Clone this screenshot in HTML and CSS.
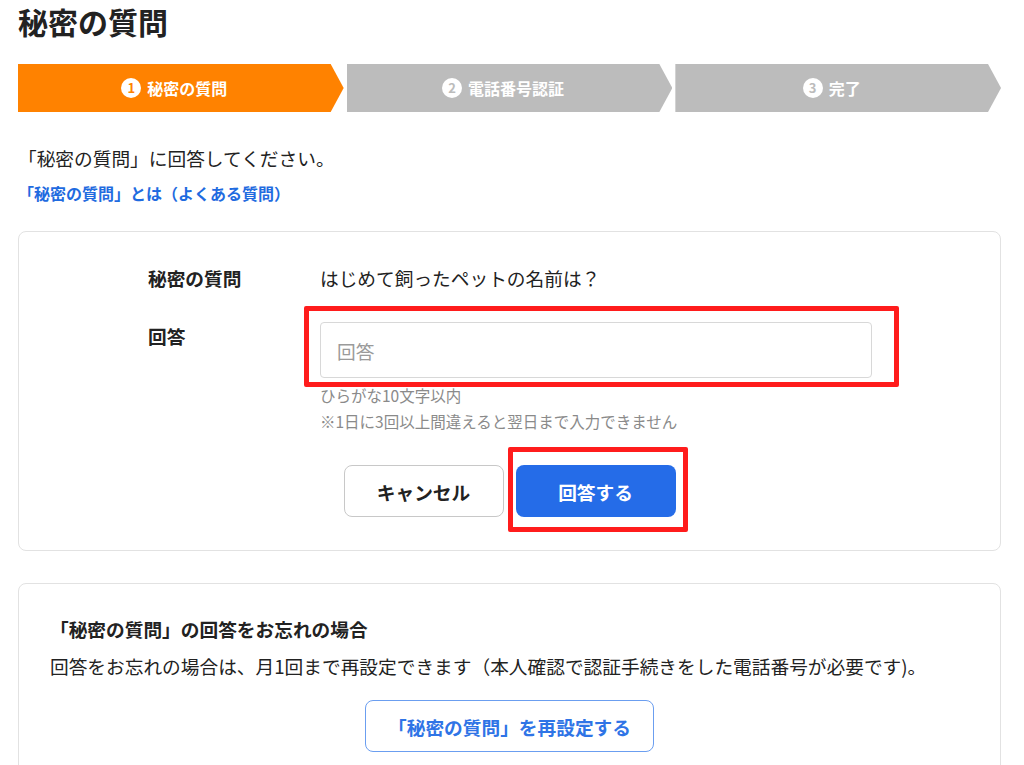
FILE: index.html
```html
<!DOCTYPE html>
<html lang="ja">
<head>
    <meta charset="UTF-8">
    <meta name="viewport" content="width=device-width, initial-scale=1.0">
    <title>秘密の質問</title>
    <link rel="stylesheet" href="styles.css">
</head>
<body>

    <div class="page">
        <h1 class="page-title">秘密の質問</h1>

        <!-- Step Bar -->
        <ol class="steps">
            <li class="step is-current"><span class="step-num">1</span>秘密の質問</li>
            <li class="step"><span class="step-num">2</span>電話番号認証</li>
            <li class="step"><span class="step-num">3</span>完了</li>
        </ol>

        <p class="lead">「秘密の質問」に回答してください。</p>
        <a class="faq-link" href="#">「秘密の質問」とは（よくある質問）</a>

        <!-- Answer Form -->
        <form class="card answer-card" onsubmit="return false;">
            <div class="form-grid">
                <div class="form-label">秘密の質問</div>
                <div class="form-value">はじめて飼ったペットの名前は？</div>

                <label class="form-label" for="answer">回答</label>
                <div class="form-field">
                    <div class="marked">
                        <input type="text" id="answer" class="text-input" placeholder="回答">
                        <span class="mark mark-input"></span>
                    </div>
                    <p class="hint">ひらがな10文字以内</p>
                    <p class="hint">※1日に3回以上間違えると翌日まで入力できません</p>
                </div>
            </div>

            <div class="form-actions">
                <button type="button" class="btn btn-cancel">キャンセル</button>
                <div class="marked">
                    <button type="submit" class="btn btn-primary">回答する</button>
                    <span class="mark mark-submit"></span>
                </div>
            </div>
        </form>

        <!-- Forgotten Answer -->
        <div class="card reset-card">
            <h2 class="reset-title">「秘密の質問」の回答をお忘れの場合</h2>
            <p class="reset-text">回答をお忘れの場合は、月1回まで再設定できます（本人確認で認証手続きをした電話番号が必要です)。</p>
            <div class="reset-actions">
                <button type="button" class="btn btn-outline">「秘密の質問」を再設定する</button>
            </div>
        </div>
    </div>

</body>
</html>
```

FILE: styles.css
```css
/* Global Styles */
body {
    margin: 0;
    font-family: "Noto Sans CJK JP", "Noto Sans", sans-serif;
    font-size: 18.7px;
    line-height: 27px;
    color: #222;
    background: #fff;
}

.page {
    width: 983px;
    margin-left: 18px;
    padding-bottom: 40px;
}

.page-title {
    margin: 0;
    font-size: 30px;
    line-height: 42px;
    font-weight: bold;
}

/* Step Bar */
.steps {
    display: flex;
    gap: 3px;
    margin: 22px 0 0;
    padding: 0;
    list-style: none;
}

.step {
    flex: 1;
    height: 48px;
    padding-right: 13px;
    display: flex;
    align-items: center;
    justify-content: center;
    gap: 6px;
    background: #bcbcbc;
    color: #fff;
    font-size: 16px;
    font-weight: bold;
    clip-path: polygon(0 0, calc(100% - 13px) 0, 100% 50%, calc(100% - 13px) 100%, 0 100%);
}

.step.is-current {
    background: #ff8200;
}

.step-num {
    flex: none;
    width: 20px;
    height: 20px;
    border-radius: 50%;
    background: #fff;
    color: #bcbcbc;
    font-size: 13px;
    line-height: 20px;
    text-align: center;
}

.is-current .step-num {
    color: #ff8200;
}

/* Intro */
.lead {
    margin: 32px 0 0;
}

.faq-link {
    display: block;
    margin-top: 10px;
    font-size: 16px;
    line-height: 24px;
    font-weight: bold;
    color: #1f6be0;
    text-decoration: none;
}

/* Cards */
.card {
    border: 1px solid #e2e2e2;
    border-radius: 8px;
    background: #fff;
}

.answer-card {
    margin-top: 26px;
    padding: 32px 0 33px;
}

.form-grid {
    width: 723px;
    margin: 0 auto;
    display: grid;
    grid-template-columns: 172px 1fr;
    row-gap: 31px;
}

.form-label {
    font-weight: bold;
}

.form-field {
    width: 552px;
}

.text-input {
    display: block;
    box-sizing: border-box;
    width: 100%;
    height: 56px;
    padding: 0 16px;
    border: 1px solid #d8d8d8;
    border-radius: 4px;
    font-family: inherit;
    font-size: 18.7px;
    color: #222;
}

.text-input::placeholder {
    color: #9a9a9a;
}

.hint {
    margin: 0;
    font-size: 15.5px;
    line-height: 26px;
    color: #8a8a8a;
}

.hint:first-of-type {
    margin-top: 4px;
}

.form-actions {
    display: flex;
    justify-content: center;
    gap: 12px;
    margin-top: 31px;
}

/* Buttons */
.btn {
    box-sizing: border-box;
    height: 52px;
    border-radius: 8px;
    font-family: inherit;
    font-size: 18.7px;
    font-weight: bold;
    cursor: pointer;
}

.btn-cancel {
    width: 160px;
    background: #fff;
    border: 1px solid #c8c8c8;
    color: #222;
}

.btn-primary {
    display: block;
    width: 160px;
    background: #256ce8;
    border: none;
    color: #fff;
}

.btn-outline {
    width: 289px;
    background: #fff;
    border: 1.5px solid #6b9ef0;
    color: #2f74e6;
}

/* Red check marks */
.marked {
    position: relative;
}

.mark {
    position: absolute;
    border: 5px solid #ff1c1c;
    border-radius: 2px;
    pointer-events: none;
}

.mark-input {
    top: -16px;
    left: -16px;
    right: -27px;
    bottom: -9px;
}

.mark-submit {
    top: -18px;
    left: -8px;
    right: -12px;
    bottom: -15px;
}

/* Forgotten answer */
.reset-card {
    margin-top: 32px;
    padding: 31px 31px 40px;
}

.reset-title {
    margin: 0;
    font-size: 18.7px;
    line-height: 27px;
    font-weight: bold;
}

.reset-text {
    margin: 10px 0 0;
}

.reset-actions {
    display: flex;
    justify-content: center;
    margin-top: 21px;
}
```
